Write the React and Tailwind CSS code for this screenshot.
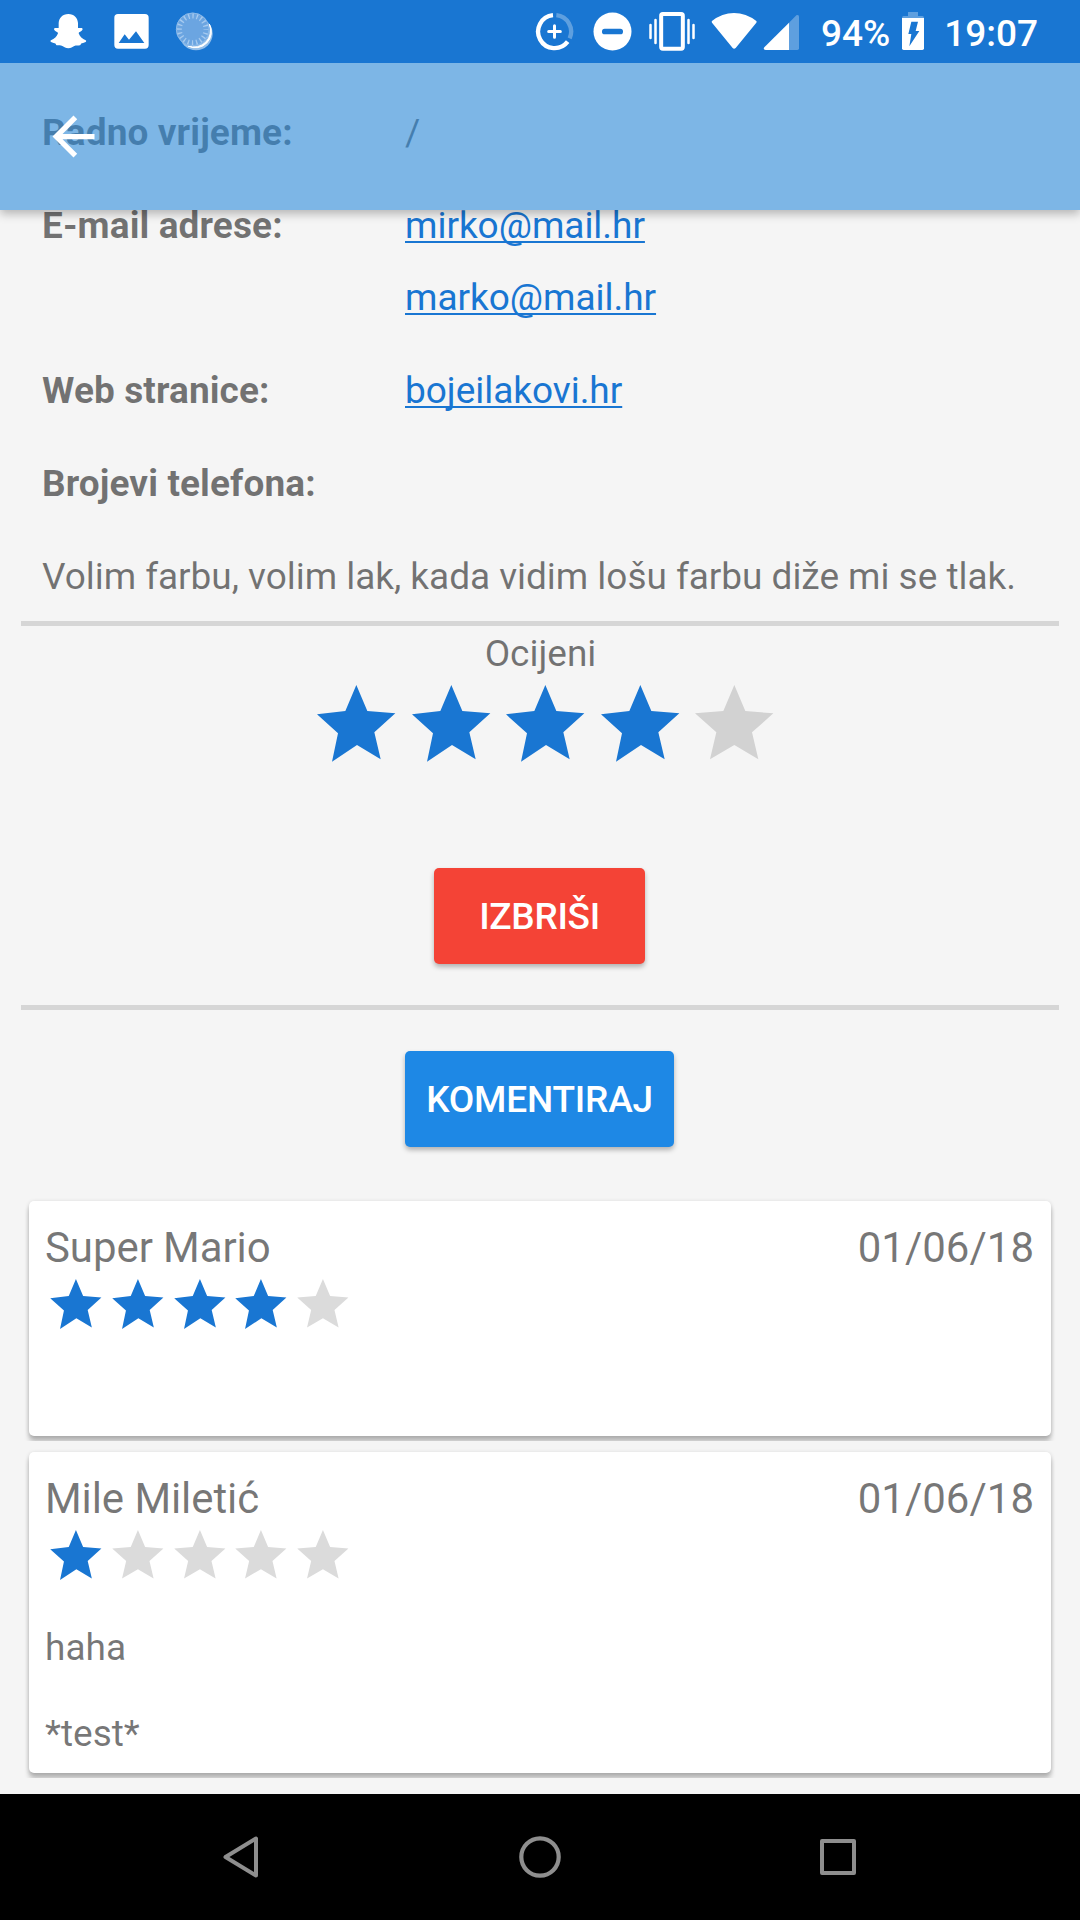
const STAR_ON =
  "142,0 175,78 259,85 196,142 215,223 144,180 69,230 87,145 24,88 109,78";
const STAR_OFF =
  "142,0 175,78 259,85 195,142 214,223 142,180 69,223 88,142 24,85 109,78";

function Stars({ value, starClass, offColor }) {
  return (
    <div className="flex">
      {[1, 2, 3, 4, 5].map((n) => (
        <svg key={n} viewBox="0 0 283.5 240" className={starClass}>
          <polygon
            points={n <= value ? STAR_ON : STAR_OFF}
            fill={n <= value ? "#1976d2" : offColor}
          />
        </svg>
      ))}
    </div>
  );
}

function StatusBar() {
  return (
    <header className="flex h-[63px] shrink-0 items-start bg-[#1976d2] text-[37px] font-medium text-white">
      {/* Ghost notification */}
      <svg viewBox="150 36 111 114" className="ml-[50px] mt-[12px] h-[38px] w-[37px]" fill="#fff">
        <path d="M205 42c18 0 28 12 29 27v15c4 1 9-1 12 0 3 3 2 6-1 8-4 3-9 4-9 8 3 9 11 17 21 21 2 1 2 4 0 5-5 3-11 3-14 5-1 2-1 4-3 5-6 1-12 0-17 2-6 3-10 7-18 7s-12-4-18-7c-5-2-11-1-17-2-2-1-2-3-3-5-3-2-9-2-14-5-2-1-2-4 0-5 10-4 18-12 21-21 0-4-5-5-9-8-3-2-4-5-1-8 3-1 8 1 12 0V69c1-15 11-27 29-27z" />
      </svg>
      {/* Picture notification */}
      <svg viewBox="342 42 105 105" className="ml-[27px] mt-[14px] h-[35px] w-[35px]" fill="#fff">
        <path fillRule="evenodd" d="M354 42h81q11 0 11 11v82q0 11-11 11h-81q-11 0-11-11V53q0-11 11-11zM356 129h77l-25-35-21 25-13-16z" />
      </svg>
      {/* Dial notification */}
      <svg viewBox="525 36 117 117" className="ml-[26px] mt-[12px] h-[39px] w-[39px]">
        <circle cx="588" cy="101" r="50" fill="#94bfea" />
        <path d="M628 72a48 48 0 0 1-64 66a50 50 0 0 0 64-66z" fill="#fff" stroke="#fff" strokeWidth="3" />
        <circle cx="578" cy="88" r="50" fill="#6ba5e1" />
        <circle cx="578" cy="88" r="49" fill="none" stroke="#8ab9e9" strokeWidth="3" />
        <circle cx="578" cy="88" r="40" fill="none" stroke="#a6caef" strokeWidth="15" strokeDasharray="4 8.566" strokeDashoffset="2" />
      </svg>

      {/* Data saver */}
      <svg viewBox="105 36 117 117" className="ml-[321px] mt-[12px] h-[39px] w-[39px]" fill="none" stroke="#fff">
        <path d="M159 45.500A49.500 49.500 0 1 0 203 125" strokeWidth="13" />
        <path d="M169 45.500A49.500 49.500 0 0 1 209 115" strokeWidth="13" opacity=".3" />
        <path d="M163.500 77v35M146 94.500h35" strokeWidth="9" strokeLinecap="round" />
      </svg>
      {/* Do not disturb */}
      <svg viewBox="279 36 117 117" className="ml-[19px] mt-[12px] h-[39px] w-[39px]">
        <circle cx="337.500" cy="94.500" r="57" fill="#fff" />
        <rect x="306" y="86" width="63" height="17" rx="8" fill="#1976d2" />
      </svg>
      {/* Vibrate */}
      <svg viewBox="444 33 144 123" className="ml-[16px] mt-[11px] h-[41px] w-[48px]" fill="none" stroke="#fff">
        <rect x="483.500" y="42" width="65" height="104" rx="5" strokeWidth="12" />
        <path d="M451.500 75v39M466.500 60v69M565.500 60v69M580.500 75v39" strokeWidth="7.500" strokeLinecap="round" />
      </svg>
      {/* Wi-Fi */}
      <svg viewBox="633 36 138 114" className="ml-[15px] mt-[12px] h-[38px] w-[46px]">
        <path d="M636 63q30-24 66-24t67 24q2 2 0 5l-62 76q-5 5-9 0l-62-76q-2-3 0-5z" fill="#fff" />
      </svg>
      {/* Cell signal */}
      <svg viewBox="789 42 111 111" className="ml-[6px] mt-[14px] h-[37px] w-[37px]" fill="#fff">
        <path d="M867 68v82h-70q-9-1-4-8z" />
        <path d="M867 68l22-22q8-3 8 4v95q0 5-5 5h-25z" opacity=".3" />
      </svg>
      <span className="ml-[21px] mt-[12px] leading-[43px]">94%</span>
      {/* Charging battery */}
      <svg viewBox="366 33 66 120" className="ml-auto mr-[20px] mt-[11px] h-[40px] w-[22px]">
        <path d="M384 36h30v12h13q5 0 5 6h-66q0-6 5-6h13z" fill="#fff" opacity=".3" />
        <path d="M366 54h66v91q0 5-5 5h-56q-5 0-5-5z" fill="#fff" />
        <path d="M394 65h20l-7 28h11l-30 46 6-37h-9z" fill="#1976d2" />
      </svg>
      <span className="mr-[42px] mt-[12px] leading-[43px]">19:07</span>
    </header>
  );
}

function AppBar() {
  return (
    <div className="absolute inset-x-0 top-0 flex h-[147px] items-center bg-[rgba(37,135,219,0.575)] pl-[42px] shadow-[0_4px_9px_rgba(0,0,0,0.26)]">
      <svg viewBox="0 0 24 24" className="h-[63px] w-[63px]" fill="#fff">
        <path d="M20 11H7.830l5.590-5.590L12 4l-8 8 8 8 1.410-1.410L7.830 13H20v-2z" />
      </svg>
    </div>
  );
}

function Row({ label, children }) {
  return (
    <div className="flex pl-[42px] leading-[72px]">
      <div className="w-[363px] shrink-0 font-bold tracking-[0.1px]">{label}</div>
      <div className="flex flex-col items-start">{children}</div>
    </div>
  );
}

function Link({ children }) {
  return (
    <a className="tracking-[-0.03px] text-[#1976d2] underline decoration-2 underline-offset-[3px] [text-decoration-skip-ink:none]">
      {children}
    </a>
  );
}

function Comment({ name, date, rating, text, className }) {
  return (
    <article
      className={`mx-[29px] rounded-[5px] bg-white px-[16px] pt-[22px] shadow-[0_6px_5px_rgba(0,0,0,0.22),0_1px_4px_rgba(0,0,0,0.16)] [clip-path:inset(-3px_-5px_-5px_-5px)] ${className}`}
    >
      <div className="flex justify-between text-[42px] leading-[50px]">
        <span className="tracking-[-0.08px]">{name}</span>
        <span className="pr-[1px]">{date}</span>
      </div>
      <div className="mt-[6px]">
        <Stars value={rating} starClass="h-[52.3px] w-[61.75px]" offColor="#dbdbdb" />
      </div>
      <p className="mt-[44px] whitespace-pre-line leading-[43px]">{text}</p>
    </article>
  );
}

function NavBar() {
  return (
    <nav className="flex h-[126px] shrink-0 items-center justify-center bg-black">
      <div className="flex w-[299px] justify-center">
        <svg viewBox="0 0 46 46" className="h-[46px] w-[46px]" fill="none" stroke="#8e8e8e" strokeWidth="4" strokeLinejoin="round">
          <path d="M38 4.500v37L7.500 23z" />
        </svg>
      </div>
      <div className="flex w-[299px] justify-center">
        <svg viewBox="0 0 46 46" className="h-[46px] w-[46px]" fill="none" stroke="#8e8e8e" strokeWidth="4.200">
          <circle cx="23" cy="23" r="18.700" />
        </svg>
      </div>
      <div className="flex w-[299px] justify-center">
        <svg viewBox="0 0 46 46" className="h-[46px] w-[46px]" fill="none" stroke="#8e8e8e" strokeWidth="4" strokeLinejoin="round">
          <rect x="6" y="7" width="32" height="32" />
        </svg>
      </div>
    </nav>
  );
}

export default function App() {
  return (
    <div className="flex h-[1920px] w-[1080px] flex-col overflow-hidden bg-[#f5f5f5] font-['Roboto',sans-serif] text-[37px] text-black/54">
      <StatusBar />
      <main className="relative h-[1731px] shrink-0 overflow-hidden pt-[34px]">
        <section className="flex flex-col gap-[21px]">
          <Row label="Radno vrijeme:">/</Row>
          <Row label="E-mail adrese:">
            <Link>mirko@mail.hr</Link>
            <Link>marko@mail.hr</Link>
          </Row>
          <Row label="Web stranice:">
            <Link>bojeilakovi.hr</Link>
          </Row>
          <Row label="Brojevi telefona:" />
          <p className="whitespace-nowrap pl-[42px] leading-[72px] tracking-[-0.04px]">
            Volim farbu, volim lak, kada vidim lošu farbu diže mi se tlak.
          </p>
        </section>
        <div className="mx-[21px] mt-[8px] h-[5px] bg-[#d6d6d6]" />
        <div className="mt-[6px] pl-[1px] text-center leading-[43px]">Ocijeni</div>
        <div className="mt-[10px] pl-[309px]">
          <Stars value={4} starClass="h-[80px] w-[94.5px]" offColor="#d2d2d2" />
        </div>
        <button className="ml-[434px] mt-[103px] block h-[96px] w-[211px] rounded-[5px] bg-[#f44336] pt-[2px] font-medium tracking-[-0.3px] text-white shadow-[0_3px_5px_rgba(0,0,0,0.28)]">
          IZBRIŠI
        </button>
        <div className="mx-[21px] mt-[41px] h-[5px] bg-[#d6d6d6]" />
        <button className="ml-[405px] mt-[41px] block h-[96px] w-[269px] rounded-[5px] bg-[#1e88e5] pt-[2px] font-medium tracking-[-0.2px] text-white shadow-[0_3px_5px_rgba(0,0,0,0.28)]">
          KOMENTIRAJ
        </button>
        <Comment className="mt-[54px] h-[235px]" name="Super Mario" date="01/06/18" rating={4} text="" />
        <Comment className="mt-[16px] h-[321px]" name="Mile Miletić" date="01/06/18" rating={1} text={"haha\n\n*test*"} />
        <AppBar />
      </main>
      <NavBar />
    </div>
  );
}
